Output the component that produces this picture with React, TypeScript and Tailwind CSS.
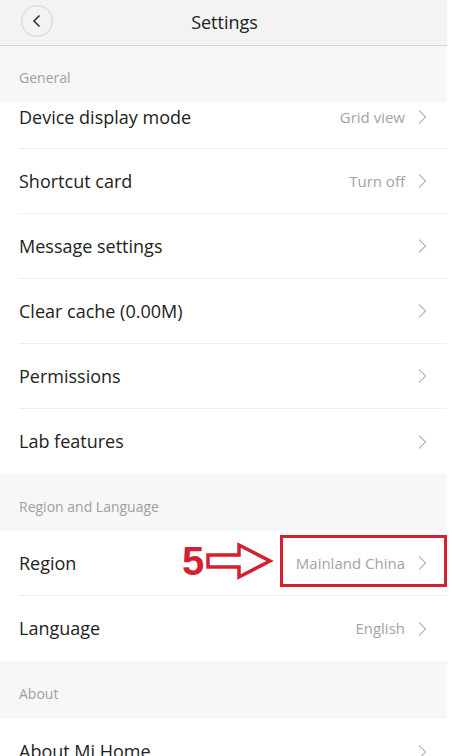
import React from 'react';

type Row = { label: string; value?: string; highlight?: boolean };

function Chevron() {
  return (
    <svg width="10" height="16" viewBox="0 0 10 16" className="shrink-0">
      <path d="M2 1.5 L8.5 8 L2 14.5" fill="none" stroke="#bdbdbd" strokeWidth="1.4" />
    </svg>
  );
}

function SectionHeader({ title, h }: { title: string; h: string }) {
  return (
    <div className={`${h} bg-[#f7f7f7] flex items-center pl-[19px] pt-[7px] text-[14px] text-[#a0a0a0]`}>
      {title}
    </div>
  );
}

function SettingRow({ label, value, last, short }: Row & { last?: boolean; short?: boolean }) {
  return (
    <div className={`${short ? 'h-[47px] items-start' : 'h-[65px] items-center'} flex pl-[19px] bg-white`}>
      <div className={`flex-1 flex items-center h-full ${last ? '' : 'border-b border-[#eeeeee]'} pr-[20px]`}>
        <div className={`flex-1 flex items-center ${short ? 'h-[30px] self-start' : ''}`}>
          <span className="text-[18px] text-[#222222]">{label}</span>
        </div>
        <div className={`flex items-center gap-[12px] ${short ? 'h-[30px] self-start' : ''}`}>
          {value && <span className="text-[15px] text-[#a3a3a3]">{value}</span>}
          <Chevron />
        </div>
      </div>
    </div>
  );
}

function Annotation() {
  return (
    <div className="absolute left-[182px] top-[541px] flex items-center pointer-events-none">
      <span className="text-[40px] leading-[36px] font-bold text-[#d42030]" style={{ fontFamily: '"Liberation Sans", Arial, sans-serif' }}>
        5
      </span>
      <svg width="70" height="40" viewBox="0 0 70 40" className="ml-[1px]">
        <path
          d="M3 14 L34 14 L34 4 L65 20 L34 36 L34 26 L3 26 Z"
          fill="none"
          stroke="#d42030"
          strokeWidth="3.5"
          strokeLinejoin="miter"
        />
      </svg>
    </div>
  );
}

export default function App() {
  const general: Row[] = [
    { label: 'Shortcut card', value: 'Turn off' },
    { label: 'Message settings' },
    { label: 'Clear cache (0.00M)' },
    { label: 'Permissions' },
  ];

  return (
    <div className="w-[452px] h-[756px] overflow-hidden bg-white" style={{ fontFamily: '"Open Sans", "Liberation Sans", Arial, sans-serif' }}>
      <div className="w-[447px] relative">
        {/* nav bar */}
        <div className="h-[46px] bg-[#f3f3f3] border-b border-[#d6d6d6] flex items-center relative">
          <button className="absolute left-[21px] top-[5px] w-[32px] h-[32px] rounded-full border border-[#cfcfcf] flex items-center justify-center">
            <svg width="10" height="14" viewBox="0 0 10 14">
              <path d="M7.5 1.5 L2 7 L7.5 12.5" fill="none" stroke="#333" strokeWidth="1.6" />
            </svg>
          </button>
          <div className="flex-1 text-center text-[18px] text-[#222222] pl-[2px]">Settings</div>
        </div>

        <SectionHeader title="General" h="h-[56px]" />
        <SettingRow label="Device display mode" value="Grid view" short />
        {general.map((r) => (
          <SettingRow key={r.label} {...r} />
        ))}
        <SettingRow label="Lab features" last />

        <SectionHeader title="Region and Language" h="h-[57px]" />
        <SettingRow label="Region" value="Mainland China" />
        <SettingRow label="Language" value="English" last />

        <SectionHeader title="About" h="h-[58px]" />
        <SettingRow label="About Mi Home" last />

        {/* annotation */}
        <div className="absolute left-[280px] top-[535px] w-[167px] h-[52px] border-[3px] border-[#d42030] pointer-events-none" />
        <Annotation />
      </div>
    </div>
  );
}
